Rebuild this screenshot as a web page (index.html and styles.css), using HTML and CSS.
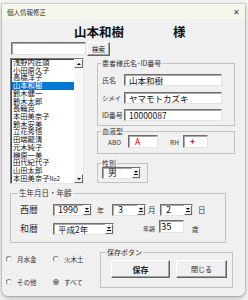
FILE: index.html
```html
<!DOCTYPE html>
<html lang="ja">
<head>
    <meta charset="UTF-8">
    <meta name="viewport" content="width=device-width, initial-scale=1.0">
    <title>個人情報修正</title>
    <link rel="stylesheet" href="styles.css">
</head>
<body>

    <div class="window">
        <!-- Title bar -->
        <div class="titlebar">
            <span class="title">個人情報修正</span>
            <span class="close">✕</span>
        </div>

        <div class="form">
            <!-- Selected patient -->
            <div class="header">
                <span class="name">山本和樹</span>
                <span class="sama">様</span>
            </div>

            <div class="search">
                <div class="textbox search-box"></div>
                <button class="btn search-btn">検索</button>
            </div>

            <div class="main">
                <!-- Patient list -->
                <div class="listbox">
                    <ul class="items">
                        <li>浅野内匠頭</li>
                        <li>小田原久子</li>
                        <li>高橋洋子</li>
                        <li class="selected">山本和樹</li>
                        <li>鈴木健一</li>
                        <li>鈴木太郎</li>
                        <li>長輪克</li>
                        <li>本田美奈子</li>
                        <li>鈴木安美</li>
                        <li>立花秀悟</li>
                        <li>田端龍清</li>
                        <li>元木純子</li>
                        <li>榊原一美</li>
                        <li>田代紀代子</li>
                        <li>山田太郎</li>
                        <li>本田美奈子<small>No2</small></li>
                    </ul>
                    <div class="scrollbar">
                        <div class="scroll-btn up"></div>
                        <div class="track"></div>
                        <div class="scroll-btn down"></div>
                    </div>
                </div>

                <div class="right">
                    <fieldset class="frame patient">
                        <legend>患者様氏名･ID番号</legend>
                        <div class="fields">
                            <span class="label">氏名</span>
                            <div class="textbox">山本和樹</div>
                            <span class="label kana">シメイ</span>
                            <div class="textbox">ヤマモトカズキ</div>
                            <span class="label">ID番号</span>
                            <div class="textbox">10000087</div>
                        </div>
                    </fieldset>

                    <fieldset class="frame blood">
                        <legend>血液型</legend>
                        <div class="blood-row">
                            <span class="small-label abo">ABO</span>
                            <div class="textbox red abo-box">A</div>
                            <span class="small-label rh">RH</span>
                            <div class="textbox red rh-box">+</div>
                        </div>
                    </fieldset>

                    <fieldset class="frame sex">
                        <legend>性別</legend>
                        <div class="combo sex-combo"><span class="value">男</span><span class="drop"></span></div>
                    </fieldset>
                </div>
            </div>

            <!-- Birthday / age -->
            <fieldset class="frame birth">
                <legend>生年月日・年齢</legend>
                <div class="birth-row">
                    <span class="era">西暦</span>
                    <div class="combo year"><span class="value">1990</span><span class="drop"></span></div>
                    <span class="unit nen">年</span>
                    <div class="combo month"><span class="value">3</span><span class="drop"></span></div>
                    <span class="unit tsuki">月</span>
                    <div class="combo day"><span class="value">2</span><span class="drop"></span></div>
                    <span class="unit hi">日</span>
                </div>
                <div class="birth-row second">
                    <span class="era">和暦</span>
                    <div class="combo wareki"><span class="value">平成2年</span><span class="drop"></span></div>
                    <span class="age-label">年齢</span>
                    <div class="textbox age">35</div>
                    <span class="unit sai">歳</span>
                </div>
            </fieldset>

            <div class="bottom">
                <div class="options">
                    <label class="option"><span class="radio"></span>月水金</label>
                    <label class="option"><span class="radio"></span>火木土</label>
                    <label class="option"><span class="radio"></span>その他</label>
                    <label class="option"><span class="radio checked"></span>すべて</label>
                </div>

                <fieldset class="frame save">
                    <legend>保存ボタン</legend>
                    <div class="buttons">
                        <button class="btn save-btn">保存</button>
                        <button class="btn close-btn">閉じる</button>
                    </div>
                </fieldset>
            </div>
        </div>
    </div>

</body>
</html>
```

FILE: styles.css
```css
* {
    box-sizing: border-box;
}

body {
    margin: 0;
    width: 248px;
    height: 300px;
    overflow: hidden;
    background-color: #f2f2f2;
    font-family: "Noto Sans CJK JP", "Noto Sans", sans-serif;
    color: #222;
}

.window {
    margin: 4px 0 0 2px;
    width: 243px;
    height: 292px;
    background-color: #f0f0f0;
    border-radius: 0 0 6px 6px;
    box-shadow: 0 0 0 1px rgba(0, 0, 0, 0.12), 0 2px 5px rgba(0, 0, 0, 0.25);
    overflow: hidden;
}

.titlebar {
    height: 15px;
    display: flex;
    align-items: center;
    justify-content: space-between;
    padding: 0 5px;
    background-color: #f4f8ec;
    font-size: 6.5px;
    color: #333;
}

.close {
    font-size: 8px;
    color: #444;
}

.form {
    height: 277px;
}

/* header */
.header {
    display: flex;
    height: 23px;
    padding-top: 5px;
}

.name,
.sama {
    font-size: 12.5px;
    font-weight: bold;
    line-height: 15px;
    color: #111;
}

.name {
    margin-left: 72px;
}

.sama {
    margin-left: 49px;
}

/* common controls */
.textbox,
.combo {
    height: 12px;
    background-color: #fff;
    border: 1px solid;
    border-color: #6f6f6f #e3e3e3 #e3e3e3 #6f6f6f;
    box-shadow: inset 1px 1px 0 #a8a8a8;
    white-space: nowrap;
}

.textbox {
    padding-left: 4px;
    font-size: 8.5px;
    line-height: 10px;
    color: #111;
}

.combo {
    display: flex;
}

.combo .value {
    flex: 1;
    padding-left: 4px;
    font-size: 9px;
    line-height: 10px;
    color: #111;
}

.drop {
    width: 8px;
    display: flex;
    flex-direction: column;
    align-items: center;
    justify-content: center;
    background-color: #f0f0f0;
    border: 1px solid;
    border-color: #fff #6a6a6a #6a6a6a #fff;
}

.drop::before {
    content: "";
    border-left: 2px solid transparent;
    border-right: 2px solid transparent;
    border-top: 2px solid #000;
}

.drop::after {
    content: "";
    width: 4px;
    height: 1px;
    margin-top: 1px;
    background-color: #000;
}

.btn {
    margin: 0;
    padding: 0;
    font-family: inherit;
    color: #222;
    background-color: #f0f0f0;
    border: 1px solid;
    border-color: #fff #646464 #646464 #fff;
    box-shadow: inset -1px -1px 0 #a0a0a0;
    cursor: pointer;
}

.red {
    color: #ff0000;
}

/* search */
.search {
    display: flex;
    height: 14px;
    padding-left: 9px;
}

.search-box {
    width: 75px;
    height: 13px;
}

.search-btn {
    width: 23px;
    height: 14px;
    margin-left: 1px;
    font-size: 6.5px;
}

/* list + right column */
.main {
    display: flex;
    margin-top: 2px;
    height: 126px;
}

.listbox {
    display: flex;
    margin-left: 8px;
    width: 74px;
    height: 126px;
    background-color: #fff;
    border: 1px solid;
    border-color: #7a7a7a #e6e6e6 #e6e6e6 #7a7a7a;
    box-shadow: inset 1px 1px 0 #454545;
}

.items {
    flex: 1;
    list-style: none;
    margin: 0;
    padding: 0 0 0 1px;
    font-size: 7.3px;
    line-height: 7.73px;
    color: #111;
}

.items li {
    height: 7.73px;
    padding-left: 1px;
    white-space: nowrap;
}

.items li.selected {
    background-color: #0078d7;
    color: #fff;
}

.items small {
    font-size: 5.5px;
}

.scrollbar {
    width: 9px;
    display: flex;
    flex-direction: column;
    background-color: #f8f8f8;
}

.scroll-btn {
    height: 9px;
    display: flex;
    align-items: center;
    justify-content: center;
    background-color: #f0f0f0;
    border: 1px solid;
    border-color: #fff #6a6a6a #6a6a6a #fff;
}

.scroll-btn.up::before {
    content: "";
    border-left: 2px solid transparent;
    border-right: 2px solid transparent;
    border-bottom: 2px solid #000;
}

.scroll-btn.down::before {
    content: "";
    border-left: 2px solid transparent;
    border-right: 2px solid transparent;
    border-top: 2px solid #000;
}

.track {
    flex: 1;
}

.right {
    display: flex;
    flex-direction: column;
    align-items: flex-start;
    margin-left: 13px;
    width: 138px;
}

/* frames */
.frame {
    margin: 0;
    padding: 0;
    min-width: 0;
    border: 1px solid #c2c2c2;
}

.frame legend {
    margin-left: 3px;
    padding: 0 1px;
    font-size: 7px;
    line-height: 10px;
    color: #333;
}

.patient {
    width: 138px;
    height: 68px;
}

.fields {
    display: grid;
    grid-template-columns: 22px 98px;
    grid-auto-rows: 12px;
    row-gap: 5.5px;
    align-items: center;
    padding: 6px 0 0 4px;
}

.label {
    font-size: 7px;
    line-height: 12px;
    white-space: nowrap;
    color: #333;
}

.label.kana {
    font-size: 6.5px;
    letter-spacing: -0.3px;
}

.blood {
    width: 138px;
    height: 28px;
}

.blood-row {
    display: flex;
    align-items: center;
    margin-top: -1px;
    padding-left: 10px;
}

.small-label {
    font-size: 6.5px;
    color: #333;
}

.abo {
    width: 20px;
}

.abo-box {
    width: 30px;
    height: 13px;
    padding-left: 6px;
}

.rh {
    width: 13px;
    margin-left: 12px;
}

.rh-box {
    width: 25px;
    height: 13px;
    padding-left: 6px;
    font-weight: bold;
}

.sex {
    width: 51px;
    height: 25px;
    margin-top: 4px;
}

.sex-combo {
    width: 39px;
    margin: -1px 0 0 4px;
}

.sex-combo .value {
    padding-left: 5px;
}

/* birthday */
.birth {
    width: 216px;
    height: 55px;
    margin: 4px 0 0 8px;
}

.birth legend {
    margin-left: 7px;
    font-size: 7.5px;
}

.birth-row {
    display: flex;
    align-items: center;
    height: 12px;
    margin-top: 6px;
    padding-left: 9px;
}

.birth-row.second {
    align-items: flex-start;
    height: 15px;
    margin-top: 4px;
}

.era {
    width: 33px;
    font-size: 9px;
    line-height: 12px;
    color: #333;
}

.second .era,
.second .combo,
.second .age-label,
.second .unit {
    margin-top: 3px;
}

.year {
    width: 39px;
}

.month {
    width: 34px;
}

.day {
    width: 33px;
}

.month .value,
.day .value {
    padding-left: 5px;
}

.unit {
    font-size: 7.5px;
    line-height: 12px;
    color: #333;
}

.nen {
    width: 15px;
    margin-left: 5px;
    font-size: 7px;
}

.tsuki {
    width: 12px;
    margin-left: 2px;
}

.hi {
    margin-left: 5px;
}

.wareki {
    width: 61px;
}

.wareki .value {
    font-size: 8.5px;
}

.age-label {
    width: 16px;
    margin-left: 29px;
    font-size: 6px;
    line-height: 12px;
    color: #333;
}

.age {
    width: 25px;
    height: 13px;
    padding-left: 1px;
    font-size: 9.5px;
}

.sai {
    margin-left: 8px;
    font-size: 6.5px;
}

/* bottom */
.bottom {
    display: flex;
    height: 53px;
}

.options {
    display: grid;
    grid-template-columns: 47px 47px;
    grid-auto-rows: 8px;
    row-gap: 15px;
    margin-left: 4px;
    padding-top: 12px;
}

.option {
    display: flex;
    align-items: center;
    font-size: 6.5px;
    line-height: 8px;
    color: #333;
}

.radio {
    width: 6px;
    height: 6px;
    margin-right: 5px;
    border-radius: 50%;
    background-color: #fff;
    border: 1px solid;
    border-color: #808080 #e0e0e0 #e0e0e0 #808080;
}

.radio.checked {
    background-color: #111;
    border-color: #808080;
    box-shadow: inset 0 0 0 1px #fff;
}

.save {
    width: 133px;
    height: 41px;
    margin-top: 4px;
}

.save legend {
    margin-left: 5px;
}

.buttons {
    display: flex;
    gap: 6px;
    padding: 3px 0 0 10px;
}

.save-btn {
    width: 59px;
    height: 18px;
    font-size: 8px;
    font-weight: bold;
}

.close-btn {
    width: 51px;
    height: 18px;
    font-size: 7px;
}
```
